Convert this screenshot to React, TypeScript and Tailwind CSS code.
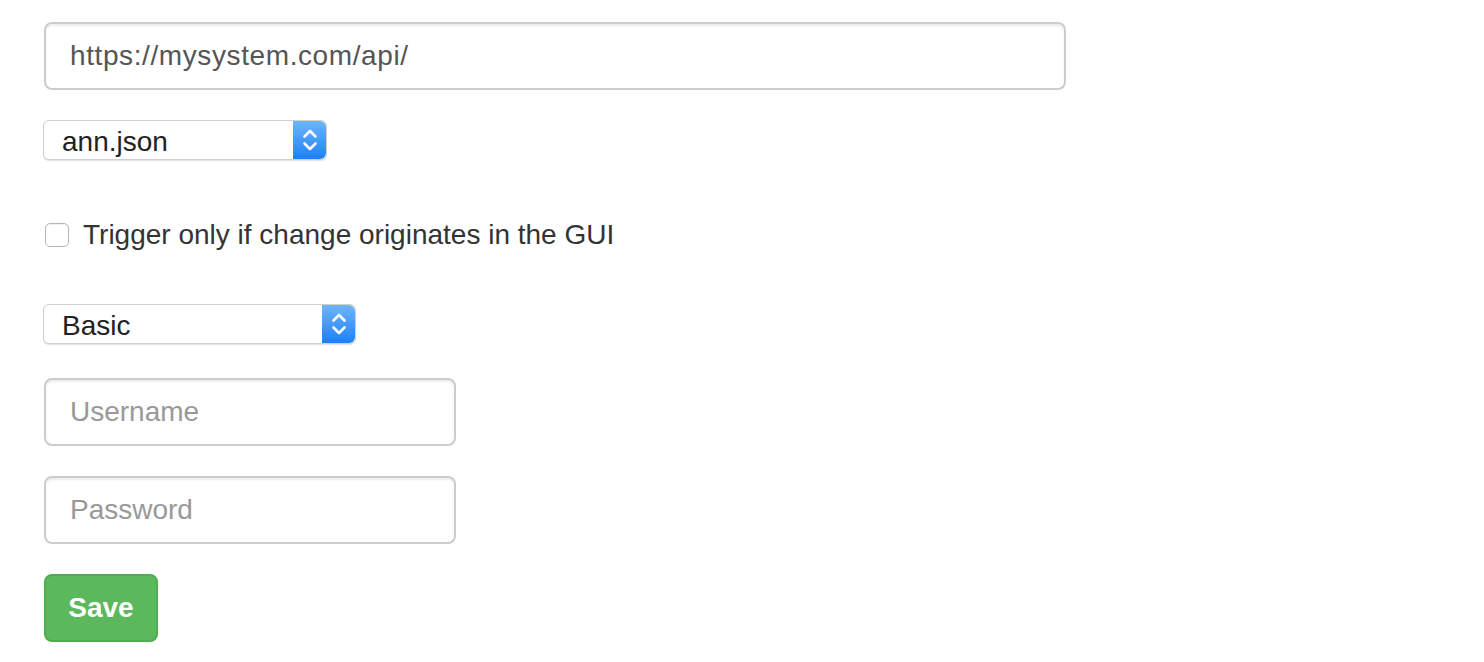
const font = "font-['Helvetica_Neue','Liberation_Sans',Arial,sans-serif]"

function Stepper() {
  return (
    <div className="flex h-full w-[33px] items-center justify-center rounded-r-[6px] bg-[linear-gradient(to_bottom,#6fb5fb,#1c80f7)]">
      <svg width="16" height="26" viewBox="0 0 16 26" fill="none" stroke="white" strokeWidth="2.6" strokeLinecap="round" strokeLinejoin="round">
        <path d="M2.5 9.5 L8 4 L13.5 9.5" />
        <path d="M2.5 16.5 L8 22 L13.5 16.5" />
      </svg>
    </div>
  )
}

function FakeSelect({ value, width }: { value: string; width: string }) {
  return (
    <div className={`flex h-[40px] ${width} items-center justify-between rounded-[6px] border border-[#cfcfcf] bg-white shadow-[0_1px_1px_rgba(0,0,0,0.12)]`}>
      <span className="pl-[18px] pt-[3px] text-[28px] leading-none text-[#222]">{value}</span>
      <Stepper />
    </div>
  )
}

function TextInput({ value, placeholder, width }: { value?: string; placeholder?: string; width: string }) {
  return (
    <div className={`flex h-[68px] ${width} items-center rounded-[8px] border-2 border-[#cccccc] bg-white px-[24px] shadow-[inset_0_2px_2px_rgba(0,0,0,0.075)]`}>
      {value ? (
        <span className="text-[28px] leading-none tracking-[0.6px] text-[#555]">{value}</span>
      ) : (
        <span className="text-[28px] leading-none text-[#999]">{placeholder}</span>
      )}
    </div>
  )
}

export default function App() {
  return (
    <div className={`${font} min-h-[662px] bg-white pl-[44px] pt-[22px]`}>
      <TextInput value="https://mysystem.com/api/" width="w-[1022px]" />

      <div className="mt-[30px] -ml-px">
        <FakeSelect value="ann.json" width="w-[284px]" />
      </div>

      <label className="mt-[61px] flex items-center gap-[14px]">
        <span className="ml-px h-[24px] w-[24px] rounded-[5px] border border-[#b4b4b4] bg-white shadow-[inset_0_1px_1px_rgba(0,0,0,0.06)]" />
        <span className="text-[28px] leading-none text-[#333]">Trigger only if change originates in the GUI</span>
      </label>

      <div className="mt-[55px] -ml-px">
        <FakeSelect value="Basic" width="w-[313px]" />
      </div>

      <div className="mt-[34px]">
        <TextInput placeholder="Username" width="w-[412px]" />
      </div>
      <div className="mt-[30px]">
        <TextInput placeholder="Password" width="w-[412px]" />
      </div>

      <button className="mt-[30px] flex h-[68px] w-[114px] items-center justify-center rounded-[8px] border-2 border-[#4cae4c] bg-[#5cb85c] text-[28px] leading-none font-bold text-white">
        Save
      </button>
    </div>
  )
}
